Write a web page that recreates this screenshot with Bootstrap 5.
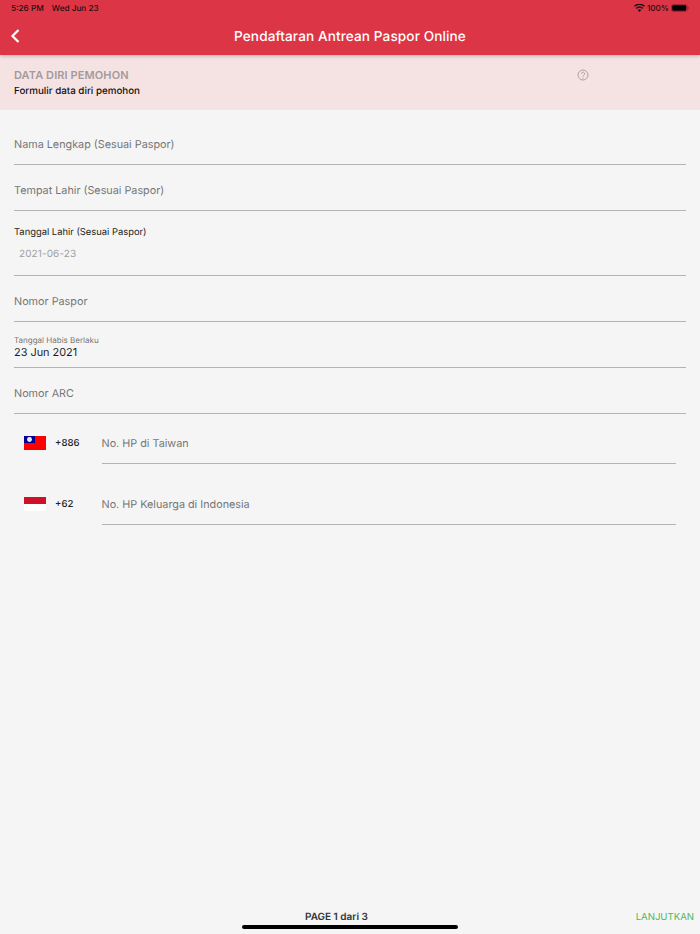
<!DOCTYPE html>
<html lang="en">
<head>
    <meta charset="UTF-8">
    <meta name="viewport" content="width=device-width, initial-scale=1.0">
    <title>Pendaftaran Antrean Paspor Online</title>
    <link href="https://cdn.jsdelivr.net/npm/bootstrap@5.3.2/dist/css/bootstrap.min.css" rel="stylesheet">
    <style>
        html, body { height: 100%; }
        body { background: #f5f5f5; font-family: Inter, "Noto Sans", sans-serif; color: #1c1c1c; text-rendering: geometricPrecision; }
        .app { height: 934px; }
        .app-top { background: #dc3545; height: 55px; box-shadow: 0 1px 4px rgba(0,0,0,.25); z-index: 2; }
        .status { height: 17px; padding: 0 11px; font-size: 8.2px; font-weight: 500; color: #1a1014; }
        .status-time { margin-right: 6px; }
        .status-right { gap: 2px; }
        .title-row { height: 38px; padding-left: 9px; }
        .back-btn { width: 12px; height: 16px; }
        .app-title { font-size: 13.6px; font-weight: 500; color: #fff; left: 0; right: 0; top: 27px; text-align: center; letter-spacing: .1px; }
        .intro { background: #f5e3e3; height: 55px; padding: 14px 14px 0; }
        .intro-head { font-size: 11px; font-weight: 600; color: #a39a9a; line-height: 13px; letter-spacing: .1px; }
        .intro-sub { font-size: 9.8px; font-weight: 500; color: #111; line-height: 13px; margin-top: 3px; }
        .help-icon { right: 111px; top: 14px; width: 12px; height: 12px; }
        .fields { padding: 0 14px; }
        .field { border-bottom: 1px solid #b3b3b3; font-size: 10.8px; color: #757575; }
        .field-plain { height: 46px; padding-top: 18px; line-height: 16px; }
        .field-first { height: 55px; padding-top: 27px; }
        .field-date { height: 65px; padding-top: 15px; }
        .date-label { font-size: 9.4px; color: #222; line-height: 13px; }
        .date-value { font-size: 10px; color: #a0a0a0; padding: 9px 0 0 5px; line-height: 13px; letter-spacing: .1px; }
        .field-filled { height: 46px; padding-top: 13px; }
        .filled-label { font-size: 8px; color: #757575; line-height: 10px; }
        .filled-value { font-size: 10.9px; color: #1c1c1c; line-height: 15px; }
        .phone-row { height: 61px; padding: 33px 24px 0; }
        .phone-first { height: 50px; padding-top: 22px; }
        .flag { width: 22px; height: 14px; flex: none; display: block; }
        .dial { font-size: 9.6px; font-weight: 500; color: #222; width: 46.5px; margin-left: 9px; line-height: 16px; }
        .phone-input { flex: 1; font-size: 10.8px; color: #757575; border-bottom: 1px solid #b3b3b3; line-height: 16px; }
        .foot { left: 0; right: 0; bottom: 0; height: 34px; }
        .page-count { font-size: 10px; font-weight: 600; color: #333; left: 305px; top: 11px; line-height: 13px; }
        .next-link { font-size: 9.6px; color: #4fb958; right: 6px; top: 11px; line-height: 13px; }
        .home-bar { left: 242px; width: 216px; bottom: 5px; height: 4px; background: #000; border-radius: 2px; }
    </style>
</head>
<body>
    <div class="app position-relative overflow-hidden">
        <div class="app-top position-relative">
            <div class="status d-flex align-items-center justify-content-between">
                <div><span class="status-time">5:26 PM</span> Wed Jun 23</div>
                <div class="status-right d-flex align-items-center">
                    <svg width="11" height="8" viewBox="0 0 11 8"><path d="M5.5 8 3.8 6a2.6 2.6 0 0 1 3.4 0zM2.8 4.9l-1-1.1a5.6 5.6 0 0 1 7.4 0l-1 1.1a4.1 4.1 0 0 0-5.4 0zM.9 2.8 0 1.7a8.3 8.3 0 0 1 11 0l-.9 1.1a7 7 0 0 0-9.2 0z" fill="#1a1014"/></svg>
                    <span>100%</span>
                    <svg width="18" height="8" viewBox="0 0 18 8"><rect x=".4" y=".4" width="15.6" height="7.2" rx="2" fill="none" stroke="#1a1014" stroke-opacity=".4" stroke-width=".8"/><rect x="1.2" y="1.2" width="14" height="5.6" rx="1.2" fill="#000"/><rect x="16.6" y="2.7" width="1" height="2.6" rx=".5" fill="#1a1014" fill-opacity=".4"/></svg>
                </div>
            </div>
            <div class="title-row d-flex align-items-center">
                <svg class="back-btn" viewBox="0 0 12 16"><path d="M9.5 2 3.5 8l6 6" fill="none" stroke="#fff" stroke-width="2.2"/></svg>
            </div>
            <div class="app-title position-absolute">Pendaftaran Antrean Paspor Online</div>
        </div>

        <div class="intro position-relative">
            <div class="intro-head">DATA DIRI PEMOHON</div>
            <div class="intro-sub">Formulir data diri pemohon</div>
            <svg class="help-icon position-absolute" viewBox="0 0 12 12">
                <circle cx="6" cy="6" r="5" fill="none" stroke="#a39a9a" stroke-width=".9"/>
                <path d="M4.4 4.8a1.6 1.6 0 1 1 2.5 1.3c-.6.4-.9.7-.9 1.3" fill="none" stroke="#a39a9a" stroke-width=".9"/>
                <circle cx="6" cy="8.9" r=".55" fill="#a39a9a"/>
            </svg>
        </div>

        <div class="fields">
            <div class="field field-plain field-first">Nama Lengkap (Sesuai Paspor)</div>
            <div class="field field-plain">Tempat Lahir (Sesuai Paspor)</div>
            <div class="field field-date">
                <div class="date-label">Tanggal Lahir (Sesuai Paspor)</div>
                <div class="date-value">2021-06-23</div>
            </div>
            <div class="field field-plain">Nomor Paspor</div>
            <div class="field field-filled">
                <div class="filled-label">Tanggal Habis Berlaku</div>
                <div class="filled-value">23 Jun 2021</div>
            </div>
            <div class="field field-plain">Nomor ARC</div>
        </div>

        <div class="phone-row phone-first d-flex align-items-start">
            <svg class="flag" viewBox="0 0 22 14">
                <rect width="22" height="14" fill="#fe0000"/>
                <rect width="11" height="7" fill="#000095"/>
                <circle cx="5.5" cy="3.5" r="2.4" fill="#fff"/>
                <circle cx="5.5" cy="3.5" r="1.2" fill="#dcdcf5"/>
            </svg>
            <div class="dial">+886</div>
            <div class="phone-input align-self-stretch">No. HP di Taiwan</div>
        </div>
        <div class="phone-row d-flex align-items-start">
            <svg class="flag" viewBox="0 0 22 14">
                <rect width="22" height="7" fill="#ce1126"/>
                <rect y="7" width="22" height="7" fill="#fff"/>
            </svg>
            <div class="dial">+62</div>
            <div class="phone-input align-self-stretch">No. HP Keluarga di Indonesia</div>
        </div>

        <div class="foot position-absolute">
            <div class="page-count position-absolute">PAGE 1 dari 3</div>
            <div class="next-link position-absolute">LANJUTKAN</div>
            <div class="home-bar position-absolute"></div>
        </div>
    </div>
    <script src="https://cdn.jsdelivr.net/npm/bootstrap@5.3.2/dist/js/bootstrap.bundle.min.js"></script>
</body>
</html>
